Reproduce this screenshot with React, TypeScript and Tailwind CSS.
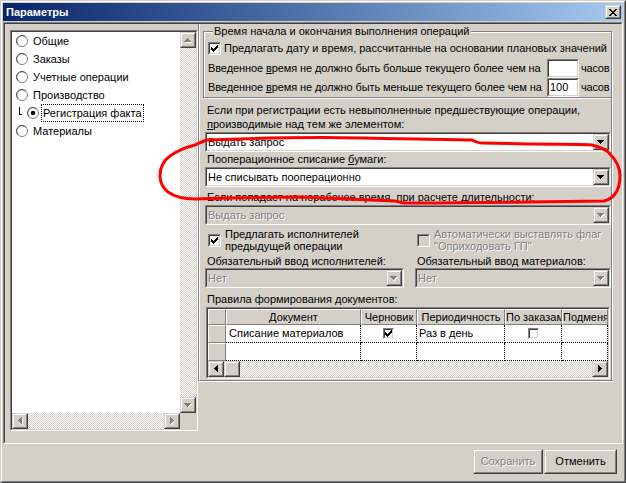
import React from "react";

type P = { className?: string; inner?: string; children?: React.ReactNode };

function Raised({ className = "", inner = "", children }: P) {
  return (
    <div className={"border border-t-[#d4d0c8] border-l-[#d4d0c8] border-b-[#404040] border-r-[#404040] " + className}>
      <div className={"h-full w-full border border-t-white border-l-white border-b-[#808080] border-r-[#808080] bg-[#d4d0c8] " + inner}>
        {children}
      </div>
    </div>
  );
}

function Sunken({ className = "", inner = "", children }: P) {
  return (
    <div className={"border border-t-[#808080] border-l-[#808080] border-b-white border-r-white " + className}>
      <div className={"h-full w-full border border-t-[#404040] border-l-[#404040] border-b-[#d4d0c8] border-r-[#d4d0c8] " + inner}>
        {children}
      </div>
    </div>
  );
}

const ARROWS = {
  up: { w: 7, h: 4, d: "M3 0h1v1H3z M2 1h3v1H2z M1 2h5v1H1z M0 3h7v1H0z" },
  down: { w: 7, h: 4, d: "M0 0h7v1H0z M1 1h5v1H1z M2 2h3v1H2z M3 3h1v1H3z" },
  left: { w: 4, h: 7, d: "M3 0h1v7H3z M2 1h1v5H2z M1 2h1v3H1z M0 3h1v1H0z" },
  right: { w: 4, h: 7, d: "M0 0h1v7H0z M1 1h1v5H1z M2 2h1v3H2z M3 3h1v1H3z" },
};

function Arrow({ dir, disabled }: { dir: keyof typeof ARROWS; disabled?: boolean }) {
  const a = ARROWS[dir];
  return (
    <svg width={a.w + 1} height={a.h + 1} viewBox={`0 0 ${a.w + 1} ${a.h + 1}`} shapeRendering="crispEdges">
      {disabled && <path d={a.d} fill="#ffffff" transform="translate(1 1)" />}
      <path d={a.d} fill={disabled ? "#808080" : "#000000"} />
    </svg>
  );
}

function SBtn({ dir, disabled }: { dir: keyof typeof ARROWS; disabled?: boolean }) {
  return (
    <Raised className="w-[16px] h-[16px] shrink-0" inner="flex items-center justify-center">
      <Arrow dir={dir} disabled={disabled} />
    </Raised>
  );
}

const CHECKER =
  "bg-[#d4d0c8] [background-image:repeating-conic-gradient(#d4d0c8_0_25%,#ffffff_0_50%)] [background-size:2px_2px]";
const DIS = "text-[#808080] [text-shadow:1px_1px_0_#ffffff]";
const CHECK =
  "M6 0h1v1H6z M5 1h2v1H5z M0 2h1v1H0z M4 2h3v1H4z M0 3h2v1H0z M3 3h3v1H3z M0 4h5v1H0z M1 5h3v1H1z M2 6h1v1H2z";

function CheckBox({ checked, disabled, small }: { checked?: boolean; disabled?: boolean; small?: boolean }) {
  return (
    <Sunken
      className={small ? "w-[11px] h-[11px] shrink-0" : "w-[13px] h-[13px] shrink-0"}
      inner={(disabled ? "bg-[#d4d0c8]" : "bg-white") + " flex items-center justify-center"}
    >
      {checked && (
        <svg width="7" height="7" viewBox="0 0 7 7" shapeRendering="crispEdges">
          <path d={CHECK} fill="#000000" />
        </svg>
      )}
    </Sunken>
  );
}

function Radio({ checked }: { checked?: boolean }) {
  return (
    <svg width="12" height="12" viewBox="0 0 12 12" className="shrink-0">
      <circle cx="6" cy="6" r="5.5" fill="#ffffff" stroke="#808080" />
      <path d="M2.2 9.8 A5 5 0 0 1 9.8 2.2" fill="none" stroke="#404040" strokeWidth="0.8" />
      {checked && <circle cx="6" cy="6" r="2.2" fill="#000000" />}
    </svg>
  );
}

function Combo({ text, disabled, className = "" }: { text: string; disabled?: boolean; className?: string }) {
  return (
    <Sunken className={"h-[20px] " + className} inner={(disabled ? "bg-[#d4d0c8]" : "bg-white") + " flex items-center"}>
      <span className={"flex-1 pl-[1px] whitespace-nowrap overflow-hidden leading-[16px] " + (disabled ? DIS : "")}>{text}</span>
      <SBtn dir="down" disabled={disabled} />
    </Sunken>
  );
}

const HEAD =
  "h-full shrink-0 border-t border-l border-t-white border-l-white border-r border-b border-r-[#808080] border-b-[#808080] bg-[#d4d0c8] text-center leading-[14px] overflow-hidden whitespace-nowrap";
const CELL = "h-full shrink-0 border-r border-b border-dotted border-black bg-white overflow-hidden whitespace-nowrap";

export default function App() {
  const items = ["Общие", "Заказы", "Учетные операции", "Производство"];
  return (
    <div className="relative w-[626px] h-[483px] bg-[#d4d0c8] font-['Liberation_Sans',Arial,sans-serif] text-[11px] text-black overflow-hidden">
      <div className="w-full h-full border border-t-[#d4d0c8] border-l-[#d4d0c8] border-b-[#404040] border-r-[#404040]">
        <div className="w-full h-full border border-t-white border-l-white border-b-[#808080] border-r-[#808080] p-[1px] flex flex-col">
          {/* Title bar */}
          <div className="h-[18px] shrink-0 bg-gradient-to-r from-[#0a246a] to-[#a6caf0] flex items-center pl-[3px] pr-[2px]">
            <span className="font-bold text-white text-[11px] leading-[14px]">Параметры</span>
            <Raised className="ml-auto w-[16px] h-[14px]" inner="flex items-center justify-center">
              <svg width="8" height="7" viewBox="0 0 8 7" shapeRendering="crispEdges">
                <path
                  d="M0 0h2v1H0z M6 0h2v1H6z M1 1h2v1H1z M5 1h2v1H5z M2 2h4v1H2z M3 3h2v1H3z M2 4h4v1H2z M1 5h2v1H1z M5 5h2v1H5z M0 6h2v1H0z M6 6h2v1H6z"
                  fill="#000000"
                />
              </svg>
            </Raised>
          </div>

          {/* Main panel */}
          <div className="mt-[1px] h-[422px] shrink-0 border border-t-[#808080] border-l-[#808080] border-b-white border-r-white">
            <div className="h-full w-full border border-t-[#404040] border-l-[#404040] border-b-[#d4d0c8] border-r-[#d4d0c8] flex items-start">
              {/* Tree list */}
              <Sunken className="ml-[5px] mt-[6px] w-[188px] h-[401px] shrink-0" inner="bg-white flex flex-col">
                <div className="flex flex-1 min-h-0">
                  <div className="flex-1 min-w-0 overflow-hidden">
                    {items.map((t) => (
                      <div key={t} className="h-[18px] flex items-center pl-[4px]">
                        <Radio />
                        <span className="ml-[5px] whitespace-nowrap">{t}</span>
                      </div>
                    ))}
                    <div className="h-[18px] flex items-center pl-[7px]">
                      <div className="w-[3px] h-[8px] border-l border-b border-black self-start mt-[3px]" />
                      <span className="ml-[5px] flex">
                        <Radio checked />
                      </span>
                      <span className="ml-[2px] h-[18px] border border-dotted border-black px-[1px] leading-[16px] whitespace-nowrap">
                        Регистрация факта
                      </span>
                    </div>
                    <div className="h-[18px] flex items-center pl-[4px]">
                      <Radio />
                      <span className="ml-[5px]">Материалы</span>
                    </div>
                  </div>
                  <div className="w-[16px] flex flex-col shrink-0">
                    <SBtn dir="up" disabled />
                    <div className={"flex-1 " + CHECKER} />
                    <SBtn dir="down" disabled />
                  </div>
                </div>
                <div className="flex h-[16px] shrink-0">
                  <SBtn dir="left" disabled />
                  <div className={"flex-1 " + CHECKER} />
                  <SBtn dir="right" disabled />
                  <div className="w-[16px] bg-[#d4d0c8]" />
                </div>
              </Sunken>

              {/* Right column */}
              <div className="w-[415px] h-[358px] shrink-0 border-l border-b border-l-[#808080] border-b-white flex flex-col">
                <div className="flex-1 border-l border-b border-l-white border-b-[#808080] flex flex-col">
                  <fieldset className="ml-[3px] mt-[1px] w-[409px] border border-[#808080] shadow-[inset_1px_1px_0_#fff,1px_1px_0_#fff] pl-[4px] pr-[1px]">
                    <legend className="ml-[5px] px-[1px] leading-[13px] bg-[#d4d0c8]">
                      Время начала и окончания выполнения операций
                    </legend>
                    <div className="mt-[3px] h-[15px] flex items-center">
                      <CheckBox checked />
                      <span className="ml-[3px] whitespace-nowrap">
                        Предлагать <span className="underline">д</span>ату и время, рассчитанные на основании плановых значений
                      </span>
                    </div>
                    <div className="mt-[3px] h-[19px] flex items-center">
                      <span className="flex-1 min-w-0 whitespace-nowrap tracking-[-0.1px]">
                        Введенное <span className="underline">в</span>ремя не должно быть больше текущего более чем на
                      </span>
                      <Sunken className="w-[32px] h-[19px] shrink-0" inner="bg-white" />
                      <span className="w-[31px] pl-[2px] shrink-0 whitespace-nowrap tracking-[-0.2px]">часов</span>
                    </div>
                    <div className="h-[19px] flex items-center">
                      <span className="flex-1 min-w-0 whitespace-nowrap tracking-[-0.1px]">
                        Введенное <span className="underline">в</span>ремя не должно быть меньше текущего более чем на
                      </span>
                      <Sunken className="w-[32px] h-[19px] shrink-0" inner="bg-white flex items-center pl-[1px] leading-[15px]">
                        100
                      </Sunken>
                      <span className="w-[31px] pl-[2px] shrink-0 whitespace-nowrap tracking-[-0.2px]">часов</span>
                    </div>
                  </fieldset>

                  <div className="flex-1 border-r border-r-white flex flex-col">
                    <div className="flex-1 border-r border-r-[#808080] flex flex-col pl-[5px]">
                      <div className="mt-[5px] ml-[2px] leading-[14px] whitespace-nowrap">
                        <div>Если при регистрации есть невыполненные предшествующие операции,</div>
                        <div>
                          <span className="underline">п</span>роизводимые над тем же элементом:
                        </div>
                      </div>
                      <Combo className="mt-[1px]" text="Выдать запрос" />
                      <div className="mt-[1px] ml-[2px] leading-[13px] whitespace-nowrap">
                        Пооперационное списание <span className="underline">б</span>умаги:
                      </div>
                      <Combo className="mt-[1px]" text="Не списывать пооперационно" />
                      <div className="mt-[4px] ml-[2px] leading-[13px] whitespace-nowrap">
                        Если попадает на нерабочее время, при расчете длительности:
                      </div>
                      <Combo className="mt-[1px]" text="Выдать запрос" disabled />

                      <div className="mt-[3px] flex">
                        <div className="w-[210px] flex items-center pl-[3px]">
                          <CheckBox checked />
                          <div className="ml-[4px] leading-[12px] whitespace-nowrap">
                            <div>Предлагать исполнителей</div>
                            <div>предыдущей операции</div>
                          </div>
                        </div>
                        <div className="flex-1 flex items-center pl-[2px]">
                          <CheckBox disabled />
                          <div className={"ml-[4px] leading-[12px] whitespace-nowrap " + DIS}>
                            <div>Автоматически выставлять флаг</div>
                            <div>"Оприходовать ГП"</div>
                          </div>
                        </div>
                      </div>

                      <div className="mt-[3px] flex leading-[13px] whitespace-nowrap">
                        <div className="w-[210px] pl-[2px]">Обязательный ввод исполнителей:</div>
                        <div className="pl-[2px]">Обязательный ввод материалов:</div>
                      </div>
                      <div className="flex">
                        <Combo className="w-[199px] shrink-0" text="Нет" disabled />
                        <Combo className="ml-[11px] flex-1" text="Нет" disabled />
                      </div>

                      <div className="mt-[5px] ml-[2px] leading-[13px] whitespace-nowrap">Правила формирования документов:</div>

                      <Sunken className="ml-[1px] mt-[1px] w-[404px] h-[72px] shrink-0" inner="bg-white flex flex-col overflow-hidden">
                        <div className="flex h-[16px] shrink-0">
                          <div className={HEAD + " w-[18px]"} />
                          <div className={HEAD + " w-[135px]"}>Документ</div>
                          <div className={HEAD + " w-[56px]"}>Черновик</div>
                          <div className={HEAD + " w-[88px]"}>Периодичность</div>
                          <div className={HEAD + " w-[57px]"}>По заказам</div>
                          <div className={HEAD + " flex-1 min-w-0 text-left"}>Подменять</div>
                        </div>
                        <div className="flex h-[18px] shrink-0">
                          <div className={HEAD + " w-[18px]"} />
                          <div className={CELL + " w-[135px] pl-[3px] leading-[17px]"}>Списание материалов</div>
                          <div className={CELL + " w-[56px] flex items-center justify-center"}>
                            <CheckBox small checked />
                          </div>
                          <div className={CELL + " w-[88px] pl-[2px] leading-[17px]"}>Раз в день</div>
                          <div className={CELL + " w-[57px] flex items-center justify-center"}>
                            <CheckBox small />
                          </div>
                          <div className={CELL + " flex-1 min-w-0"} />
                        </div>
                        <div className="flex h-[18px] shrink-0">
                          <div className={HEAD + " w-[18px]"} />
                          <div className={CELL + " w-[135px]"} />
                          <div className={CELL + " w-[56px]"} />
                          <div className={CELL + " w-[88px]"} />
                          <div className={CELL + " w-[57px]"} />
                          <div className={CELL + " flex-1 min-w-0"} />
                        </div>
                        <div className="flex h-[16px] shrink-0">
                          <SBtn dir="left" />
                          <Raised className="w-[16px] h-[16px] shrink-0" />
                          <div className={"flex-1 " + CHECKER} />
                          <SBtn dir="right" />
                        </div>
                      </Sunken>
                      <div className="flex-1" />
                    </div>
                  </div>
                </div>
              </div>
            </div>
          </div>

          {/* Footer buttons */}
          <div className="flex justify-end gap-[1px] pt-[5px] pr-[6px]">
            <Raised className="w-[70px] h-[25px]" inner="flex items-center justify-center">
              <span className={DIS}>Сохранить</span>
            </Raised>
            <Raised className="w-[73px] h-[25px]" inner="flex items-center justify-center">
              <span>Отменить</span>
            </Raised>
          </div>
        </div>
      </div>

      {/* Red hand-drawn annotation */}
      <svg className="absolute left-0 top-0 pointer-events-none" width="626" height="483" viewBox="0 0 626 483">
        <path
          d="M 207 140 C 260 138, 320 137, 362 138 C 400 139, 450 139, 472 140 C 476 142, 478 143, 482 143 L 528 144 C 560 144, 580 144, 592 145 C 600 147, 607 150, 610 154 C 616 160, 620 168, 620 176 C 620 184, 618 190, 615 194 C 612 198, 608 200, 604 201 L 528 202 C 470 203, 430 203, 405 203 C 400 203, 398 201, 395 201 L 300 197 C 270 197, 230 198, 195 199 C 185 199, 175 197, 168 192 C 162 187, 160 182, 160 176 C 160 168, 163 161, 170 156 C 177 151, 187 147, 195 145 C 200 143, 203 141, 207 140 Z"
          fill="none"
          stroke="#ff0000"
          strokeWidth="3"
          strokeLinejoin="round"
          strokeLinecap="round"
        />
      </svg>
    </div>
  );
}
